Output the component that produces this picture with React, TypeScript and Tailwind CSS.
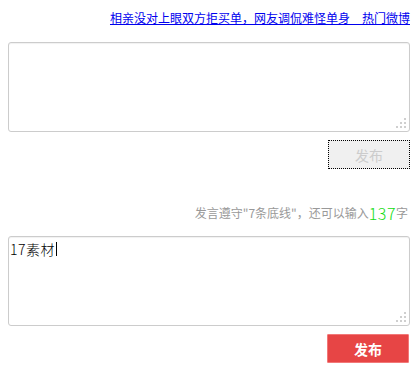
import React from "react";

const font = { fontFamily: '"Noto Sans CJK SC", "Liberation Sans", sans-serif' };

function Grip() {
  return (
    <div className="absolute right-[3px] bottom-[3px] grid grid-cols-3 gap-[2px]">
      <span className="w-[2px] h-[2px]" />
      <span className="w-[2px] h-[2px]" />
      <span className="w-[2px] h-[2px] bg-[#cfcfcf]" />
      <span className="w-[2px] h-[2px]" />
      <span className="w-[2px] h-[2px] bg-[#cfcfcf]" />
      <span className="w-[2px] h-[2px] bg-[#cfcfcf]" />
      <span className="w-[2px] h-[2px] bg-[#cfcfcf]" />
      <span className="w-[2px] h-[2px] bg-[#cfcfcf]" />
      <span className="w-[2px] h-[2px] bg-[#cfcfcf]" />
    </div>
  );
}

export default function App() {
  return (
    <div className="w-[416px] h-[373px] bg-white overflow-hidden" style={font}>
      <div className="pt-[11px] pr-[6px] text-right text-[12px] leading-[14px]">
        <a href="#" className="text-[#0000ee] underline">
          相亲没对上眼双方拒买单，网友调侃难怪单身　热门微博
        </a>
      </div>

      <div className="mt-[17px] ml-2 w-[402px] h-[90px] relative border border-[#cccccc] rounded-[3px] shadow-[inset_0_1px_1px_rgba(0,0,0,0.06)]">
        <Grip />
      </div>

      <div className="mt-2 flex justify-end pr-[6px]">
        <button className="w-[82px] h-[29px] bg-[#f0f0f0] border border-dotted border-black text-[#cccccc] text-[14px] leading-none">
          发布
        </button>
      </div>

      <div className="mt-[34px] pr-[8px] h-[20px] flex justify-end items-center text-[12px] leading-[20px] text-[#999999]">
        <span>发言遵守"7条底线"，还可以输入</span>
        <span className="text-[#11dd11] text-[16px] leading-[20px] font-light tracking-[0.5px]">
          137
        </span>
        <span>字</span>
      </div>

      <div className="mt-[13px] ml-2 w-[402px] h-[90px] relative border border-[#cccccc] rounded-[3px] shadow-[inset_0_1px_1px_rgba(0,0,0,0.06)]">
        <div className="pl-[1px] pt-[3px] text-[14px] leading-[18px] text-black flex items-center font-light tracking-[0.5px]">
          <span>17素材</span>
          <span className="inline-block w-[1px] h-[14px] bg-black ml-[1px]" />
        </div>
        <Grip />
      </div>

      <div className="mt-2 flex justify-end pr-[7px]">
        <button className="w-[82px] h-[29px] bg-[#e74545] border border-[#f27878] rounded-[1px] text-white font-bold text-[14px] leading-none">
          发布
        </button>
      </div>
    </div>
  );
}
